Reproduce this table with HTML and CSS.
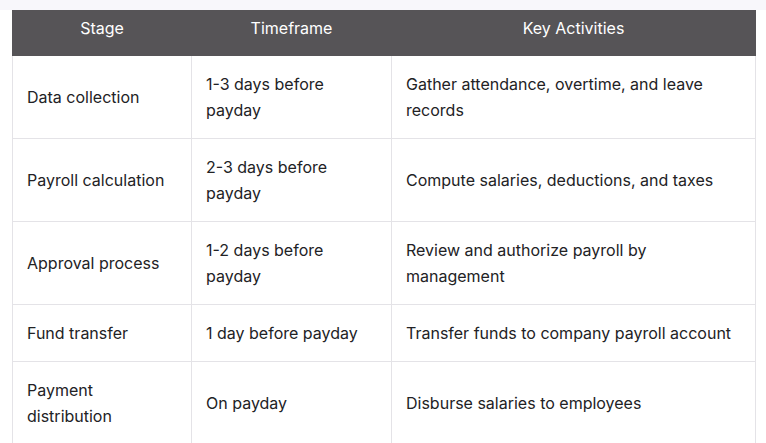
FILE: index.html
```html
<!DOCTYPE html>
<html lang="en">
<head>
<meta charset="utf-8">
<title>Payroll stages</title>
<link rel="stylesheet" href="styles.css">
</head>
<body>
<div class="topband"></div>
<div class="wrap">
<table class="grid">
  <colgroup>
    <col class="c1"><col class="c2"><col class="c3">
  </colgroup>
  <thead>
    <tr><th>Stage</th><th>Timeframe</th><th>Key Activities</th></tr>
  </thead>
  <tbody>
    <tr><td>Data collection</td><td>1-3 days before payday</td><td>Gather attendance, overtime, and leave records</td></tr>
    <tr><td>Payroll calculation</td><td>2-3 days before payday</td><td>Compute salaries, deductions, and taxes</td></tr>
    <tr><td>Approval process</td><td>1-2 days before payday</td><td>Review and authorize payroll by management</td></tr>
    <tr><td>Fund transfer</td><td>1 day before payday</td><td>Transfer funds to company payroll account</td></tr>
    <tr><td>Payment distribution</td><td>On payday</td><td>Disburse salaries to employees</td></tr>
  </tbody>
</table>
</div>
</body>
</html>
```
FILE: styles.css
```css
html, body {
  margin: 0;
  padding: 0;
  background: #ffffff;
}
body {
  font-family: Inter, "Noto Sans", sans-serif;
  color: #222225;
}
.topband {
  height: 10px;
  background: #f8f7fb;
}
.wrap {
  padding: 0 11px 0 12px;
}
.grid {
  width: 743px;
  border-collapse: collapse;
  table-layout: fixed;
  font-size: 16px;
  line-height: 26px;
}
.c1 { width: 179px; }
.c2 { width: 200px; }
.c3 { width: 364px; }
.grid th {
  background: #565457;
  color: #ffffff;
  font-weight: 400;
  text-align: center;
  padding: 4px 15px 14px;
  border: 1px solid #565457;
  height: 26px;
}
.grid td {
  border: 1px solid #e4e3e7;
  padding: 15px 14px;
  vertical-align: middle;
  text-align: left;
}
```
